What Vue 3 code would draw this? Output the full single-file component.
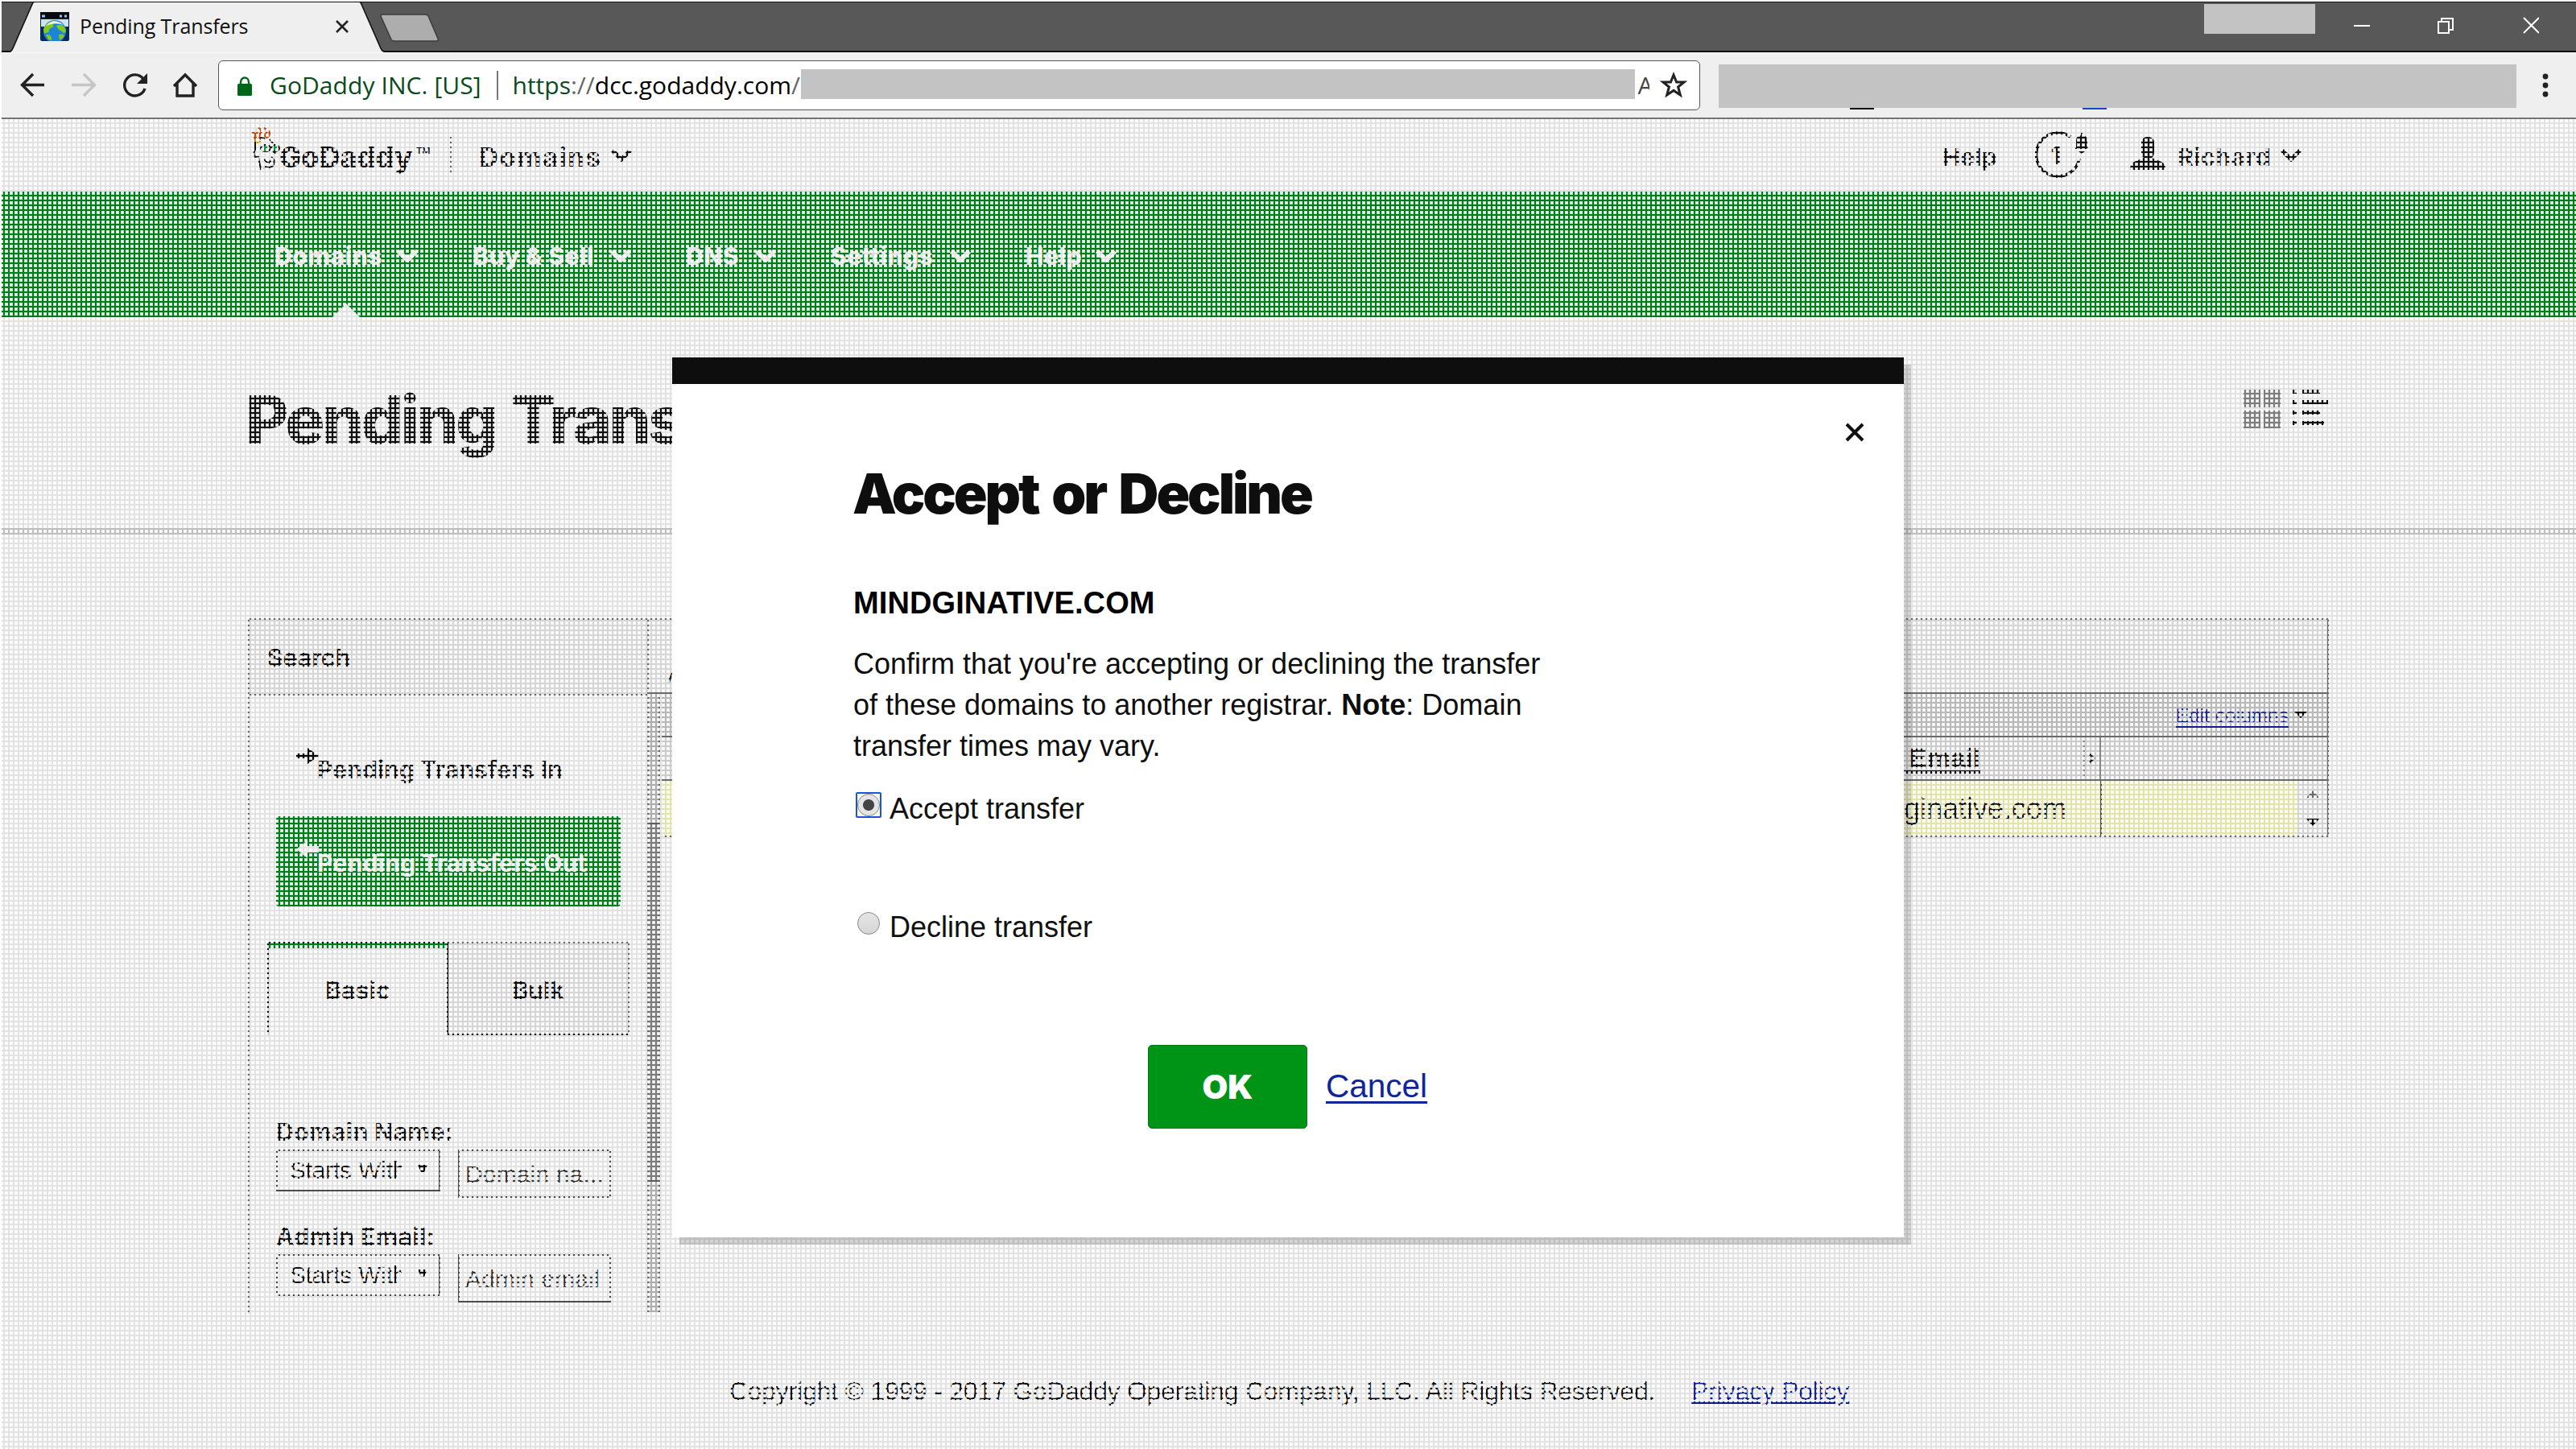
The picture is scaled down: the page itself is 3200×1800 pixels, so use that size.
<script setup>
const nav = [
  { label: 'Domains', w: 133 },
  { label: 'Buy & Sell', w: 152 },
  { label: 'DNS', w: 67 },
  { label: 'Settings', w: 129 },
  { label: 'Help', w: 68 },
]
const fields = [
  { label: 'Domain Name:', placeholder: 'Domain na...' },
  { label: 'Admin Email:', placeholder: 'Admin email' },
]
</script>

<template>
  <div class="window">
    <div class="tabstrip">
      <svg class="tabshape" width="560" height="63" viewBox="0 2 560 63">
        <path d="M13 65 Q15 64 16 60 L40 6 Q41 3 44 3 H445 Q448 3 449 6 L473 61 Q474 65 479 65 Z" fill="#efefef" />
        <path d="M2 64 H12 Q15 63 16 60 L41 3 M448 3 L473 60 Q475 64 479 64 H560" fill="none" stroke="#111" stroke-width="1.6" />
        <path d="M474 18 H528 Q531 18 532 20 L544 48 Q545 51 542 51 H490 Q487 51 486 49 L473 20 Z" fill="#adadad" stroke="#3c3c3c" stroke-width="1.5" />
      </svg>
      <div class="tab">
        <svg width="36" height="36" viewBox="0 0 36 36">
          <rect width="36" height="36" rx="2" fill="#0a2a5c" />
          <rect width="36" height="8" fill="#06090d" />
          <path d="M2 5h4M24 5h3M30 5h3" stroke="#8fc4ef" stroke-width="3" />
          <rect x="1" y="9" width="34" height="9" fill="#cfe3ee" />
          <circle cx="18" cy="24" r="14" fill="#1b86d8" />
          <path d="M4 22 Q6 12 18 11 Q14 15 17 18 Q10 20 11 24 Q7 27 5 26Z M20 17 Q30 13 32 24 Q29 28 27 24 Q22 22 20 17Z M7 28 Q15 27 14 35 L10 34Z M23 28 Q31 26 29 31 L24 35Z" fill="#86c81e" />
          <path d="M7 17 Q17 6 29 16 Q18 12 7 17Z" fill="#f1f7d8" />
        </svg>
        <span class="tabtitle">Pending Transfers</span>
        <svg width="18" height="18" viewBox="0 0 18 18"><path d="M2 2L16 16M16 2L2 16" stroke="#222" stroke-width="2.6" /></svg>
      </div>
      <div class="redact small"></div>
      <svg class="winbtns" width="240" height="24" viewBox="0 0 240 24">
        <g fill="none" stroke="#fff" stroke-width="2">
          <path d="M10 13H30" />
          <path d="M115 8H128V22H115Z M119 8V4H133V18H128" />
          <path d="M221 3L240 22M240 3L221 22" />
        </g>
      </svg>
    </div>
    <div class="toolbar">
      <svg class="navicons" width="232" height="36" viewBox="20 87 232 36" fill="none" stroke="#222" stroke-width="3.4">
        <path d="M55 104.500H28M41 91L27.500 104.500L41 118" />
        <path d="M89 104.500H117M104 91L117.500 104.500L104 118" stroke="#c6c6c6" />
        <path d="M178 97A13 13 0 1 0 180 109" />
        <path d="M183 90V103H170Z" fill="#222" stroke="none" />
        <path d="M216 106L230 92L244 106M220 103V118H240V103" />
      </svg>
      <div class="address">
        <svg class="lock" width="18" height="24" viewBox="0 0 18 24"><rect y="9" width="18" height="15" rx="1.500" fill="#00661a" /><path d="M4 10V7a5 5.500 0 0 1 10 0v3" fill="none" stroke="#00661a" stroke-width="2.400" /></svg>
        <span class="corp">GoDaddy INC. [US]</span>
        <i class="sep"></i>
        <span class="url"><em>https</em><b>://</b>dcc.godaddy.com<b>/</b></span>
        <div class="redact long"></div>
        <span class="clip">A</span>
        <svg class="star" width="34" height="34" viewBox="0 0 34 34"><path d="M17 4L20.600 13H30L22.600 19L25.300 29L17 23.400L8.700 29L11.400 19L4 13H13.400Z" fill="none" stroke="#222" stroke-width="3" /></svg>
      </div>
      <div class="redact ext"><i class="k"></i><i class="b"></i></div>
      <svg class="dots" width="8" height="32" viewBox="0 0 8 32"><g fill="#222"><circle cx="4" cy="5" r="3.400" /><circle cx="4" cy="16" r="3.400" /><circle cx="4" cy="27" r="3.400" /></g></svg>
    </div>

    <div class="page">
      <header>
        <svg class="head" width="38" height="54" viewBox="0 0 38 54" fill="none" stroke="#111" stroke-width="2">
          <path d="M2 6L6 8L5 16M10 1Q16 4 12 8Q10 13 13 15M17 1Q23 4 19 8Q17 12 21 13M5 15Q10 9 8 2M22 4Q26 8 21 13" stroke="#d4500f" stroke-width="2.400" />
          <path d="M6 16L6 28M12 13L18 14M24 15L28 20M6 28Q3 33 6 37L11 36M10 38L13 52L17 51M17 40L22 45L26 41M18 49Q26 52 29 46Q31 40 26 37M28 30L32 33" />
          <path d="M5 17L13 18M8 21L10 18" stroke="#e3b400" />
          <ellipse cx="19" cy="26" rx="6" ry="4" /><ellipse cx="31" cy="26" rx="5" ry="4" />
          <path d="M19 23V30M31 23V29" stroke="#0da24a" stroke-width="4" />
        </svg>
        <span class="brand">GoDaddy</span><sup>TM</sup>
        <i class="hsep"></i>
        <span class="hl prod">Domains</span>
        <svg class="chev" width="26" height="16" viewBox="0 0 26 16"><path d="M2 2L13 13L24 2" /></svg>
        <span class="hl help">Help</span>
        <svg class="bell" width="72" height="60" viewBox="0 0 72 60">
          <path d="M44 7A27 27 0 1 0 55 34" fill="none" stroke="#111" stroke-width="3.6" />
          <path d="M51 20V12Q51 5 58 5Q65 5 65 12V20L67 22H49ZM54 25H62L58 28ZM57 2h2v4h-2z" fill="#111" />
        </svg>
        <span class="count">1</span>
        <svg class="user" width="44" height="42" viewBox="0 0 44 42"><path d="M14 8Q14 0 22 0Q30 0 30 8V18Q30 24 27 26L39 31Q44 33 44 41H0Q0 33 5 31L17 26Q14 24 14 18Z" fill="#111" /></svg>
        <span class="hl rich">Richard</span>
        <svg class="chev" width="26" height="16" viewBox="0 0 26 16"><path d="M2 2L13 13L24 2" /></svg>
      </header>
      <nav>
        <div v-for="n in nav" :key="n.label" class="ni">
          <span :style="{ width: n.w + 'px' }">{{ n.label }}</span>
          <svg class="chev" width="26" height="16" viewBox="0 0 26 16"><path d="M2 2L13 13L24 2" /></svg>
        </div>
        <i class="caret"></i>
      </nav>
      <div class="titlebar">
        <h1>Pending Transfers</h1>
        <svg width="106" height="48" viewBox="0 0 106 48">
          <path d="M0 0H21V22H0ZM25 0H46V22H25ZM0 26H21V48H0ZM25 26H46V48H25Z" fill="#8c8c8c" />
          <path d="M61 0h5v5h-5zM73 0h22v5h-22zM61 13h5v5h-5zM73 13h32v5h-32zM61 26h5v5h-5zM73 26h22v5h-22zM61 39h5v5h-5zM73 39h27v5h-27z" fill="#111" />
        </svg>
      </div>
      <main>
        <aside>
          <div class="shead"><span>Search</span></div>
          <div class="sbody">
            <div class="link">
              <svg width="28" height="22" viewBox="0 0 28 22"><path d="M0 8H14V1L28 11L14 21V14H0Z" /></svg>
              <span>Pending Transfers In</span>
            </div>
            <div class="link on">
              <svg width="28" height="22" viewBox="0 0 28 22"><path d="M28 7H14V0L0 11L14 22V15H28Z" /></svg>
              <span>Pending Transfers Out</span>
            </div>
            <div class="tabs"><div class="t on">Basic</div><div class="t">Bulk</div></div>
            <div v-for="f in fields" :key="f.label" class="field">
              <label>{{ f.label }}</label>
              <div class="frow">
                <div class="select"><span>Starts With</span><svg width="12" height="10" viewBox="0 0 12 10"><path d="M0 0H12L8 9H4Z" /></svg></div>
                <div class="input">{{ f.placeholder }}</div>
              </div>
            </div>
          </div>
        </aside>
        <div class="split"><i></i></div>
        <section>
          <div class="thead0"><span>A</span></div>
          <div class="ttools"><span>Edit columns</span><svg width="16" height="8" viewBox="0 0 16 8"><path d="M0 0H16L8 8Z" /></svg></div>
          <div class="tcols">
            <span class="em">Admin Email</span>
            <div class="grip"><svg width="8" height="12" viewBox="0 0 8 12"><path d="M1 1L6 6L1 11" fill="none" stroke="#222" stroke-width="2.6" /></svg></div>
          </div>
          <div class="trow">
            <div class="cell">ginative.com</div>
            <div class="blank"></div>
            <div class="scroll"><svg width="16" height="44" viewBox="0 0 16 44"><path d="M0 9L8 0L16 9Z" fill="#777" /><path d="M0 35L8 44L16 35Z" /></svg></div>
          </div>
        </section>
      </main>
      <footer><span>Copyright © 1999 - 2017 GoDaddy Operating Company, LLC. All Rights Reserved.</span><a>Privacy Policy</a></footer>

      <svg class="mesh" width="3198" height="1652">
        <defs>
          <pattern id="mesh" x="-2" y="0" width="6" height="6" patternUnits="userSpaceOnUse">
            <path d="M4 0H6V6H0V4H4Z" fill="#000" fill-opacity="0.11" />
            <rect width="4" height="4" fill="#f9f9f9" fill-opacity="0.8" />
            <rect x="1" y="1" width="2" height="2" fill="#fff" />
          </pattern>
        </defs>
        <rect width="3198" height="1652" fill="url(#mesh)" />
      </svg>

      <div class="modal">
        <svg class="close" width="24" height="24" viewBox="0 0 24 24"><path d="M2 2L22 22M22 2L2 22" stroke="#111" stroke-width="4" /></svg>
        <h2>Accept or Decline</h2>
        <h3>MINDGINATIVE.COM</h3>
        <p>Confirm that you're accepting or declining the transfer<br>of these domains to another registrar. <b>Note</b>: Domain<br>transfer times may vary.</p>
        <div class="radio first"><i class="focus"><i class="dot sel"></i></i><span>Accept transfer</span></div>
        <div class="radio"><i class="focus off"><i class="dot"></i></i><span>Decline transfer</span></div>
        <div class="actions"><button>OK</button><a>Cancel</a></div>
      </div>
    </div>
  </div>
</template>

<style>
body { margin: 0; background: #fff; }
</style>
<style scoped>
* { box-sizing: border-box; }
.window { width: 3200px; height: 1800px; padding: 2px 0 0 2px; overflow: hidden; position: relative; background: #fff; font-family: "Liberation Sans", Arial, sans-serif; color: #111; }
.tabstrip { height: 63px; position: relative; display: flex; align-items: flex-start; background: #585858; border-top: 1px solid #111; border-bottom: 2px solid #0a0a0a; }
.tabshape { position: absolute; left: -2px; top: -1px; }
.tab { position: relative; display: flex; align-items: center; width: 384px; margin: 12px 0 0 48px; height: 36px; }
.tabtitle { flex: 1; margin: -2px 0 0 13px; font: 25px/36px "Open Sans", sans-serif; letter-spacing: -0.1px; white-space: nowrap; color: #111; }
.redact { background: #c3c3c3; }
.redact.small { width: 138px; height: 37px; margin: 2px 0 0 2304px; }
.winbtns { margin: 16px 0 0 38px; }
.toolbar { height: 83px; display: flex; align-items: center; background: #efefef; border-top: 1px solid #fafafa; border-bottom: 2px solid #747474; }
.navicons { margin-left: 18px; flex: none; }
.address { width: 1841px; height: 62px; margin-left: 19px; display: flex; align-items: center; flex: none; border: 1.5px solid #555; border-radius: 6px; background: #fff; overflow: hidden; font: 30px/40px "Open Sans", sans-serif; white-space: nowrap; }
.lock { margin-left: 23px; margin-top: 1px; }
.corp { width: 282px; margin-left: 22px; color: #0b4a1c; letter-spacing: 0.08px; }
.sep { width: 1.5px; height: 36px; background: #777; margin-right: 18px; }
.url { width: 358px; color: #000; }
.url em { font-style: normal; color: #0b4a1c; }
.url b { font-weight: 400; color: #666; }
.long { width: 1036px; height: 37px; margin-top: -4px; }
.clip { width: 14px; margin-left: 4px; overflow: hidden; color: #444; }
.star { margin-left: 13px; }
.ext { position: relative; width: 991px; height: 54px; margin-left: 23px; margin-top: 2px; }
.ext i { position: absolute; bottom: -2px; height: 2px; width: 30px; left: 163px; background: #111; }
.ext .b { left: 452px; background: #1646c8; }
.dots { margin-left: 32px; }

.page { position: relative; width: 3198px; height: 1652px; background: #fff; }
.chev { fill: none; stroke: #111; stroke-width: 5; flex: none; }
header { height: 90px; display: flex; align-items: center; padding-left: 309px; font-family: Inter, sans-serif; }
header > * { flex: none; }
.head { margin-top: -17px; }
.brand { width: 170px; font-size: 36px; line-height: 50px; font-weight: 800; margin: 4px 0 0 -2px; white-space: nowrap; }
sup { width: 16px; font-size: 11px; font-weight: 600; line-height: 12px; margin-top: -12px; }
.hsep { width: 2px; height: 46px; background: #777; margin-left: 26px; }
.hl { font-size: 32px; line-height: 40px; font-weight: 700; white-space: nowrap; }
.prod { width: 153px; margin: 4px 11px 0 34px; font-size: 33px; letter-spacing: 1.6px; }
.help { margin: 3px 0 0 1628px; width: 70px; font-size: 30px; }
.bell { margin-left: 45px; }
.count { width: 20px; margin: 0 0 0 -56px; font-size: 30px; font-weight: 700; line-height: 40px; text-align: center; }
.user { margin-left: 82px; margin-top: -4px; }
.rich { width: 118px; font-size: 30px; letter-spacing: 0.6px; margin: 3px 10px 0 15px; }
nav { position: relative; height: 156px; background: #008c1e; display: flex; align-items: center; gap: 68px; padding: 4px 0 0 339px; font: 800 30px/40px Inter, sans-serif; color: #fff; }
.ni { display: flex; align-items: center; gap: 19px; white-space: nowrap; letter-spacing: 0.5px; }
.ni .chev { stroke: #fff; stroke-width: 6; }
.caret { position: absolute; left: 411px; bottom: 0; border: 17px solid transparent; border-top: 0; border-bottom-color: #fff; }
.titlebar { height: 270px; display: flex; justify-content: space-between; align-items: flex-start; padding: 76px 307px 0 303px; border-bottom: 8px solid #d6d6d6; }
.titlebar svg { margin-top: 14px; }
h1 { margin: 2px 0 0; font: 800 82px/100px Inter, sans-serif; letter-spacing: -3.4px; word-spacing: 5px; }
main { display: flex; align-items: flex-start; padding: 104px 0 0 306px; }
aside { width: 496px; border-left: 2px solid #777; border-top: 2px solid #777; font: 700 30px/40px Inter, sans-serif; letter-spacing: 0.1px; white-space: nowrap; }
.shead { height: 94px; padding: 27px 0 0 22px; background: #f0f0f0; border-bottom: 2px solid #777; }
.sbody { height: 768px; padding: 34px 22px 0 22px; }
.link { display: flex; align-items: flex-start; width: 428px; height: 112px; margin: 0 0 4px 11px; padding: 38px 0 0 25px; }
.link svg { margin-top: -8px; margin-right: -2px; }
.link.on { background: #008c1e; border-radius: 4px; color: #fff; fill: #fff; letter-spacing: 0.3px; }
.tabs { display: flex; width: 450px; height: 116px; margin-top: 44px; }
.t { width: 226px; border: 2px solid #777; border-left: 0; border-bottom: 2px solid #111; background: #f0f0f0; text-align: center; padding-top: 38px; }
.t.on { border: 2px solid #111; border-bottom: 0; background: #fff; box-shadow: inset 0 6px #008c1e; }
.field { margin: 0 0 28px 11px; }
.tabs + .field { margin-top: 100px; }
.frow { display: flex; align-items: flex-start; gap: 22px; margin-top: 2px; height: 60px; }
label { display: block; height: 40px; letter-spacing: 0.5px; }
.select { width: 204px; height: 52px; border: 2px solid #555; padding: 0 14px 0 15px; display: flex; align-items: center; justify-content: space-between; font: 29.5px/40px "Liberation Sans", sans-serif; letter-spacing: 0; }
.select span { width: 139px; overflow: hidden; }
.select svg { margin-top: -4px; }
.input { width: 190px; height: 60px; border: 2px solid #555; padding-left: 7px; font: 30px/57px "Liberation Sans", sans-serif; letter-spacing: 0.15px; color: #333; }
.split { width: 16px; height: 770px; margin-top: 92px; background: #c4c4c4; border-left: 2px solid #777; border-right: 2px solid #777; }
.split i { display: block; height: 446px; margin-top: 162px; background: #8a8a8a; border: solid #666; border-width: 2px 0; }
section { width: 2089px; height: 272px; margin-left: -16px; padding-left: 16px; border: 2px solid #777; border-bottom: 0; }
section > div { border-bottom: 2px solid #777; }
.thead0 { height: 92px; background: #f0f0f0; margin-left: -16px; padding: 54px 0 0 23px; font-size: 28px; line-height: 30px; }
.ttools { height: 54px; background: #d0d0d0; display: flex; align-items: center; justify-content: flex-end; gap: 7px; padding-right: 25px; font-size: 24.5px; color: #10249c; }
.ttools span { border-bottom: 2px solid #10249c; line-height: 26px; margin-top: 3px; }
.tcols { height: 54px; background: #e4e4e4; display: flex; align-items: stretch; font-weight: 700; font-size: 33px; line-height: 52px; }
.em { width: 200px; margin-left: 1438px; white-space: nowrap; text-decoration: underline; text-decoration-thickness: 4px; text-underline-offset: 4px; }
.grip { width: 22px; margin-left: 128px; border: solid #999; border-width: 0 2px; display: flex; align-items: center; justify-content: center; }
.trow { height: 70px; display: flex; background: #ffffc4; font-size: 36px; line-height: 70px; }
.cell { width: 1789px; padding-left: 1543px; border-right: 2px solid #555; }
.blank { flex: 1; }
.scroll { width: 37px; background: #eee; display: flex; align-items: center; justify-content: center; }
footer { position: absolute; left: 904px; top: 1558px; display: flex; gap: 45px; font-size: 31.5px; line-height: 45px; white-space: nowrap; }
footer a { color: #10249c; text-decoration: underline; text-decoration-thickness: 3px; }
.mesh { position: absolute; left: 0; top: 0; }

.modal { position: absolute; left: 833px; top: 296px; width: 1530px; height: 1093px; padding: 95px 0 0 225px; background: #fff; border-top: 33px solid #0e0e0e; box-shadow: 9px 9px 0 rgba(0,0,0,.16); }
.close { position: absolute; right: 49px; top: 48px; }
h2 { margin: 0 0 0 -1px; font: 900 69px/82px Inter, sans-serif; letter-spacing: -3.1px; word-spacing: 6px; color: #0e0e0e; white-space: nowrap; }
h3 { margin: 70px 0 0; font: 700 38px/50px "Liberation Sans", sans-serif; letter-spacing: 0.1px; color: #000; }
p { margin: 25px 0 28px; font-size: 36px; line-height: 51px; white-space: nowrap; color: #0e0e0e; }
.radio { height: 50px; display: flex; align-items: center; font-size: 36px; line-height: 50px; margin-bottom: 121px; }
.radio.first { margin-bottom: 97px; }
.focus { display: flex; align-items: center; justify-content: center; width: 32px; height: 32px; margin: -10px 10px 0 3px; border: 2px solid #1a55d6; border-radius: 2px; }
.focus.off { border-color: transparent; }
.dot { width: 28px; height: 28px; border: 1.5px solid #888; border-radius: 50%; background: linear-gradient(#e4e4e4, #d6d6d6); }
.sel { background: radial-gradient(circle, #444 0 6.5px, #e4e4e4 7.5px); }
.actions { display: flex; align-items: center; padding-left: 366px; gap: 23px; font-size: 40.5px; }
button { width: 198px; height: 104px; padding: 0; border: 1.5px solid #007a12; border-radius: 5px; background: #009417; color: #fff; font: 900 41px/60px Inter, sans-serif; }
.actions a { margin-top: -2px; color: #0f259c; text-decoration: underline; text-decoration-thickness: 3px; text-underline-offset: 5px; }
</style>
